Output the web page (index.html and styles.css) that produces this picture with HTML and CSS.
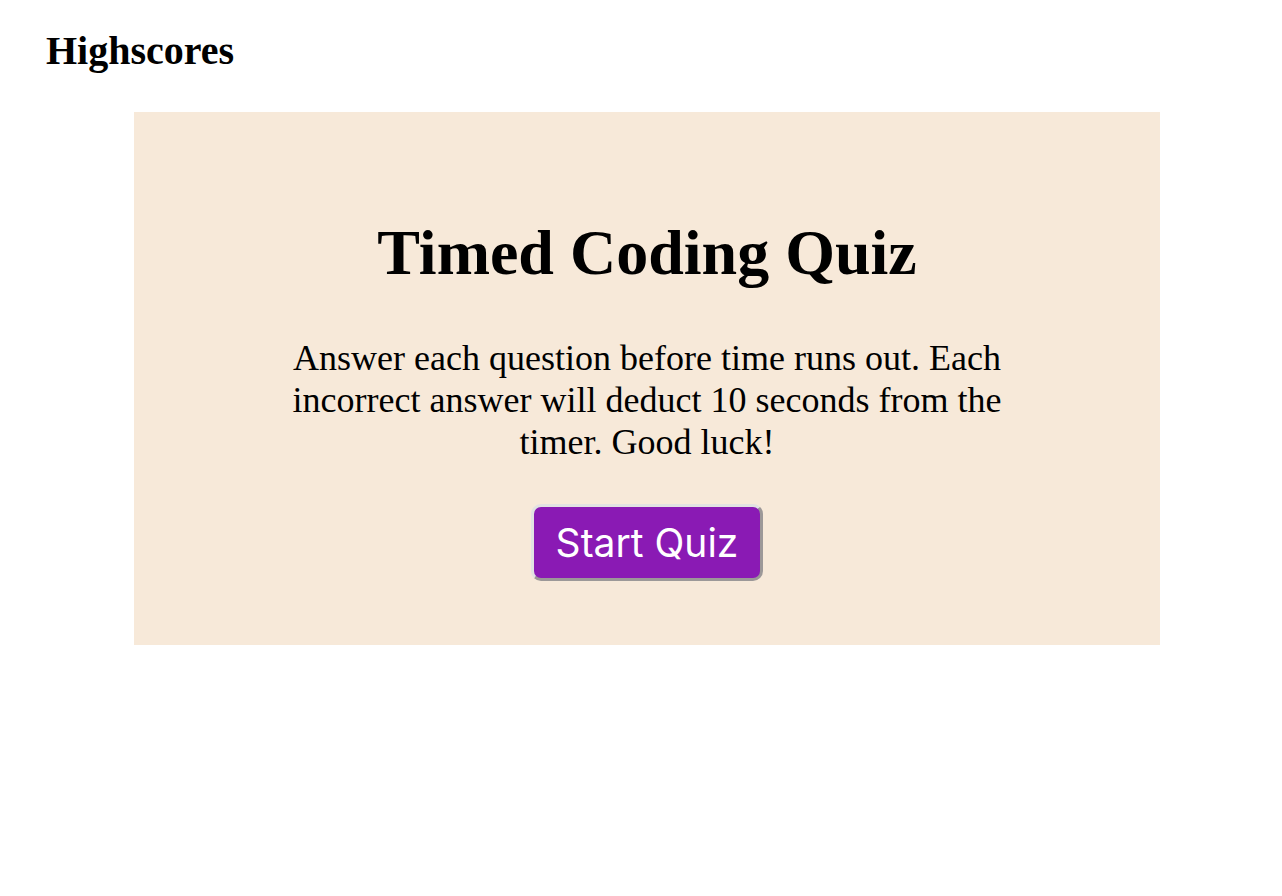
FILE: index.html
```html
<!DOCTYPE html>
<html lang="en">
<head>
<meta charset="utf-8">
<title>Timed Coding Quiz</title>
<link rel="stylesheet" href="styles.css">
</head>
<body>
<header class="top">
  <a class="highscores" href="#">Highscores</a>
</header>
<main class="wrap">
  <section class="panel">
    <h1 class="title">Timed Coding Quiz</h1>
    <p class="intro">Answer each question before time runs out. Each incorrect answer will deduct 10 seconds from the timer. Good luck!</p>
    <button class="start" type="button">Start Quiz</button>
  </section>
</main>
</body>
</html>
```
FILE: styles.css
```css
html, body {
  margin: 0;
  padding: 0;
  background: #ffffff;
}

body {
  font-family: "Liberation Serif", "Times New Roman", serif;
  color: #000;
}

.top {
  padding: 28px 0 0 46px;
  height: 112px;
  box-sizing: border-box;
}

.highscores {
  font-size: 40px;
  font-weight: bold;
  color: #000;
  text-decoration: none;
  line-height: 46px;
  display: inline-block;
}

.wrap {
  padding-left: 134px;
}

.panel {
  width: 1026px;
  box-sizing: border-box;
  background: #f7e9d9;
  padding: 104px 0 64px;
  display: flex;
  flex-direction: column;
  align-items: center;
  text-align: center;
}

.title {
  margin: 0;
  font-size: 64px;
  font-weight: bold;
}

.intro {
  margin: 47px 0 41px;
  font-size: 36px;
  max-width: 740px;
}

.start {
  font-family: Inter, "Liberation Sans", sans-serif;
  font-size: 39px;
  color: #fff;
  background: #8a1ab4;
  border: 3px solid;
  border-color: #e2e2e2 #9c9898 #9c9898 #e2e2e2;
  border-radius: 10px;
  padding: 12px 22px;
  cursor: pointer;
}
```
